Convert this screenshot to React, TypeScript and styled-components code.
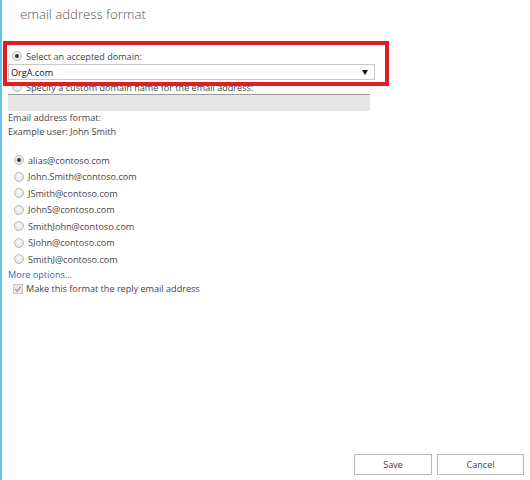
import React from "react";
import styled, { createGlobalStyle } from "styled-components";

const Global = createGlobalStyle`
  html, body { margin: 0; padding: 0; background: #fff; }
  body { font-family: "Open Sans", "Noto Sans", sans-serif; }
  * { box-sizing: border-box; }
`;

const Panel = styled.div`
  position: relative;
  width: 530px;
  height: 480px;
  border-left: 2px solid #62c3ec;
  display: flex;
  flex-direction: column;
  background: #fff;
  color: #444;
  font-size: 9.1px;
  overflow: hidden;
`;

const Title = styled.h1`
  margin: 0;
  padding: 4px 0 0 18px;
  height: 44px;
  font-weight: 300;
  font-size: 13.2px;
  line-height: 20px;
  color: #555;
`;

const Content = styled.div`
  padding-left: 6px;
  display: flex;
  flex-direction: column;
`;

const Domain = styled.div`
  position: relative;
  display: flex;
  flex-direction: column;
`;

const Highlight = styled.div`
  position: absolute;
  left: -5px;
  top: -3px;
  width: 386px;
  height: 45px;
  border: 4px solid #e31b23;
  pointer-events: none;
`;

const RadioRow = styled.label<{ $indent?: number; $h?: number; $top?: number }>`
  display: flex;
  align-items: center;
  gap: 4px;
  height: ${(p) => p.$h ?? 16.5}px;
  padding-left: ${(p) => p.$indent ?? 4}px;
  padding-top: ${(p) => p.$top ?? 0}px;
  white-space: nowrap;
  color: #444;
`;

const Radio = styled.span<{ $on?: boolean }>`
  width: 10px;
  height: 10px;
  border-radius: 50%;
  border: 1px solid #b8b8b8;
  background: radial-gradient(circle at 50% 40%, #fbfbfb, #dcdcdc);
  display: flex;
  align-items: center;
  justify-content: center;
  flex: none;
  &::after {
    content: "";
    width: 4px;
    height: 4px;
    border-radius: 50%;
    background: ${(p) => (p.$on ? "#333" : "transparent")};
  }
`;

const Select = styled.div`
  width: 367px;
  height: 16px;
  border: 1px solid #c8c8c8;
  background: #fff;
  display: flex;
  align-items: center;
  justify-content: space-between;
  padding: 0 6px 0 2px;
  color: #111;
`;

const Arrow = styled.span`
  width: 0;
  height: 0;
  border-left: 3px solid transparent;
  border-right: 3px solid transparent;
  border-top: 5px solid #111;
`;

const Input = styled.div`
  width: 362px;
  height: 17px;
  background: #e6e6e6;
  border-top: 1px solid #9a9a9a;
`;

const TextLine = styled.div`
  line-height: 14px;
  color: #444;
`;

const Info = styled.div`
  margin-bottom: 13px;
`;

const List = styled.div`
  display: flex;
  flex-direction: column;
`;

const Link = styled.a`
  color: #1e6ec0;
  text-decoration: none;
  line-height: 14px;
  cursor: pointer;
`;

const CheckRow = styled.label`
  display: flex;
  align-items: center;
  gap: 3px;
  height: 14px;
  padding-left: 5px;
  color: #444;
`;

const Check = styled.span`
  width: 10px;
  height: 10px;
  border: 1px solid #c4c4c4;
  background: #e8e8e8;
  display: flex;
  align-items: center;
  justify-content: center;
  flex: none;
`;

const Footer = styled.div`
  margin-top: auto;
  display: flex;
  justify-content: flex-end;
  gap: 5px;
  padding: 0 6px 5px 0;
`;

const Button = styled.button<{ $w: number }>`
  width: ${(p) => p.$w}px;
  height: 21px;
  border: 1px solid #b9b9b9;
  background: #fff;
  color: #444;
  font-family: "Open Sans", "Noto Sans", sans-serif;
  font-size: 9.1px;
  padding: 0;
`;

const formats = [
  "alias@contoso.com",
  "John.Smith@contoso.com",
  "JSmith@contoso.com",
  "JohnS@contoso.com",
  "SmithJohn@contoso.com",
  "SJohn@contoso.com",
  "SmithJ@contoso.com",
];

export default function App() {
  return (
    <>
      <Global />
      <Panel>
        <Title>email address format</Title>
        <Content>
          <Domain>
            <RadioRow $indent={4} $h={20} $top={4}>
              <Radio $on />
              <span>Select an accepted domain:</span>
            </RadioRow>
            <Select>
              <span>OrgA.com</span>
              <Arrow />
            </Select>
            <RadioRow $indent={4} $h={14}>
              <Radio />
              <span>Specify a custom domain name for the email address:</span>
            </RadioRow>
            <Input />
            <Highlight />
          </Domain>
          <Info>
            <TextLine>Email address format:</TextLine>
            <TextLine>Example user: John Smith</TextLine>
          </Info>
          <List>
            {formats.map((f, i) => (
              <RadioRow key={f} $indent={6}>
                <Radio $on={i === 0} />
                <span>{f}</span>
              </RadioRow>
            ))}
          </List>
          <Link>More options...</Link>
          <CheckRow>
            <Check>
              <svg width="8" height="8" viewBox="0 0 9 9">
                <path d="M1.5 4.8 L3.6 7 L7.6 1.8" fill="none" stroke="#9a9a9a" strokeWidth="1.5" />
              </svg>
            </Check>
            <span>Make this format the reply email address</span>
          </CheckRow>
        </Content>
        <Footer>
          <Button $w={78}>Save</Button>
          <Button $w={87}>Cancel</Button>
        </Footer>
      </Panel>
    </>
  );
}
